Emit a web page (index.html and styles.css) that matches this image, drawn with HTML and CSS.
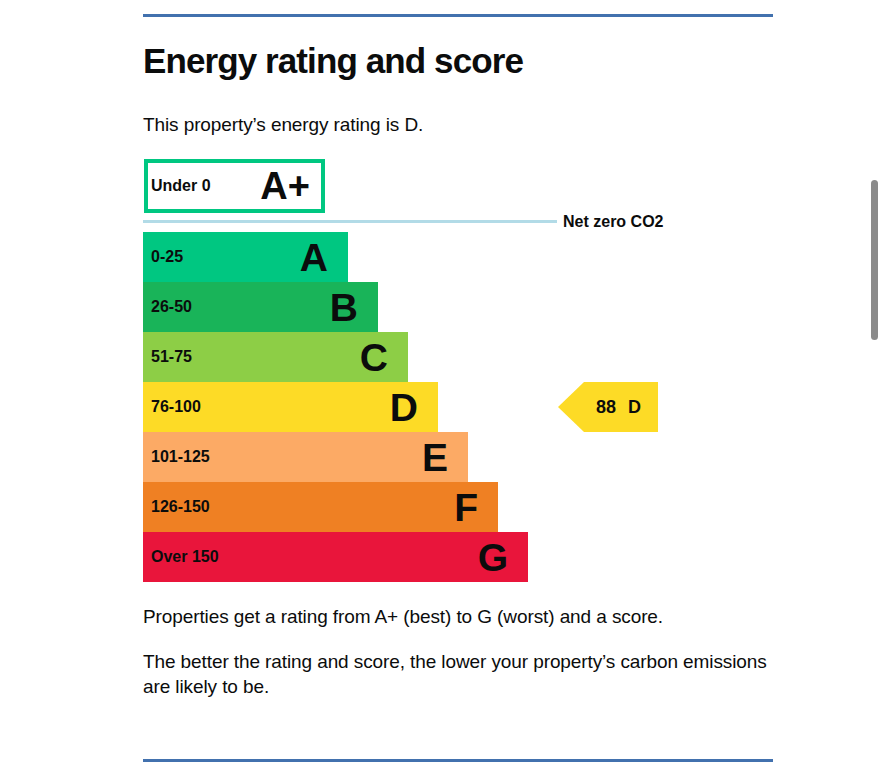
FILE: index.html
```html
<!DOCTYPE html>
<html lang="en">
<head>
<meta charset="utf-8">
<title>Energy rating and score</title>
<link rel="stylesheet" href="styles.css">
</head>
<body>
<main class="page">
  <div class="rule"></div>
  <h1 class="title">Energy rating and score</h1>
  <p class="body-text intro">This property’s energy rating is D.</p>

  <div class="epc">
    <div class="plus-box">
      <span class="range">Under 0</span>
      <span class="letter letter-plus">A+</span>
    </div>
    <div class="netzero">
      <span class="nz-line"></span>
      <span class="nz-label">Net zero CO2</span>
    </div>
    <div class="bands">
      <div class="band-row"><div class="bar band-a" style="width:205px"><span class="range">0-25</span><span class="letter">A</span></div></div>
      <div class="band-row"><div class="bar band-b" style="width:235px"><span class="range">26-50</span><span class="letter">B</span></div></div>
      <div class="band-row"><div class="bar band-c" style="width:265px"><span class="range">51-75</span><span class="letter">C</span></div></div>
      <div class="band-row"><div class="bar band-d" style="width:295px"><span class="range">76-100</span><span class="letter">D</span></div>
        <div class="score"><span>88</span><span>D</span></div>
      </div>
      <div class="band-row"><div class="bar band-e" style="width:325px"><span class="range">101-125</span><span class="letter">E</span></div></div>
      <div class="band-row"><div class="bar band-f" style="width:355px"><span class="range">126-150</span><span class="letter">F</span></div></div>
      <div class="band-row"><div class="bar band-g" style="width:385px"><span class="range">Over 150</span><span class="letter">G</span></div></div>
    </div>
  </div>

  <div class="notes">
    <p class="body-text">Properties get a rating from A+ (best) to G (worst) and a score.</p>
    <p class="body-text">The better the rating and score, the lower your property’s carbon emissions are likely to be.</p>
  </div>
  <div class="rule rule-bottom"></div>
</main>
<div class="scrollbar"></div>
</body>
</html>
```
FILE: styles.css
```css
html, body {
  margin: 0;
  padding: 0;
  background: #ffffff;
}

body {
  font-family: "Liberation Sans", Arial, sans-serif;
  color: #0b0c0c;
}

.page {
  margin-left: 143px;
  width: 630px;
  padding-top: 14px;
}

.rule {
  height: 3px;
  background: #4271ae;
}

.title {
  margin: 24px 0 0;
  font-size: 35px;
  line-height: 40px;
  font-weight: 700;
  letter-spacing: -0.9px;
}

.body-text {
  font-size: 19px;
  line-height: 25px;
  letter-spacing: -0.1px;
  margin: 0;
}

.intro {
  margin-top: 31px;
}

.epc {
  margin-top: 22px;
}

.plus-box {
  margin-left: 1px;
  width: 181px;
  height: 54px;
  box-sizing: border-box;
  border: 4px solid #00c781;
  display: flex;
  align-items: center;
  justify-content: space-between;
  padding: 0 11px 0 3px;
}

.range {
  font-size: 16px;
  font-weight: 700;
  white-space: nowrap;
}

.letter {
  font-size: 39px;
  font-weight: 700;
  line-height: 1;
}

.letter-plus {
  font-size: 38px;
}

.netzero {
  display: flex;
  align-items: center;
  height: 3px;
  margin-top: 7px;
}

.nz-line {
  width: 414px;
  height: 3px;
  background: #b2dbe7;
  flex: none;
}

.nz-label {
  margin-left: 6px;
  font-size: 16px;
  font-weight: 700;
  white-space: nowrap;
}

.bands {
  margin-top: 9px;
}

.band-row {
  display: grid;
  grid-template-columns: 415px 100px;
  height: 50px;
}

.bar {
  height: 50px;
  box-sizing: border-box;
  display: flex;
  align-items: center;
  justify-content: space-between;
  padding: 0 20px 0 8px;
}

.band-a { background: #00c781; }
.band-b { background: #19b459; }
.band-c { background: #8dce46; }
.band-d { background: #fddb26; }
.band-e { background: #fcaa65; }
.band-f { background: #ef8023; }
.band-g { background: #e9153b; }

.score {
  grid-column: 2;
  height: 50px;
  background: #fddb26;
  clip-path: polygon(0 50%, 26px 0, 100% 0, 100% 100%, 26px 100%);
  display: flex;
  align-items: center;
  gap: 12px;
  padding-left: 38px;
  box-sizing: border-box;
  font-size: 18px;
  font-weight: 700;
}

.notes {
  margin-top: 22px;
}

.notes .body-text + .body-text {
  margin-top: 20px;
}

.rule-bottom {
  margin-top: 60px;
}

.scrollbar {
  position: fixed;
  left: 871px;
  top: 180px;
  width: 7px;
  height: 160px;
  border-radius: 4px;
  background: #8b8b8b;
}
```
